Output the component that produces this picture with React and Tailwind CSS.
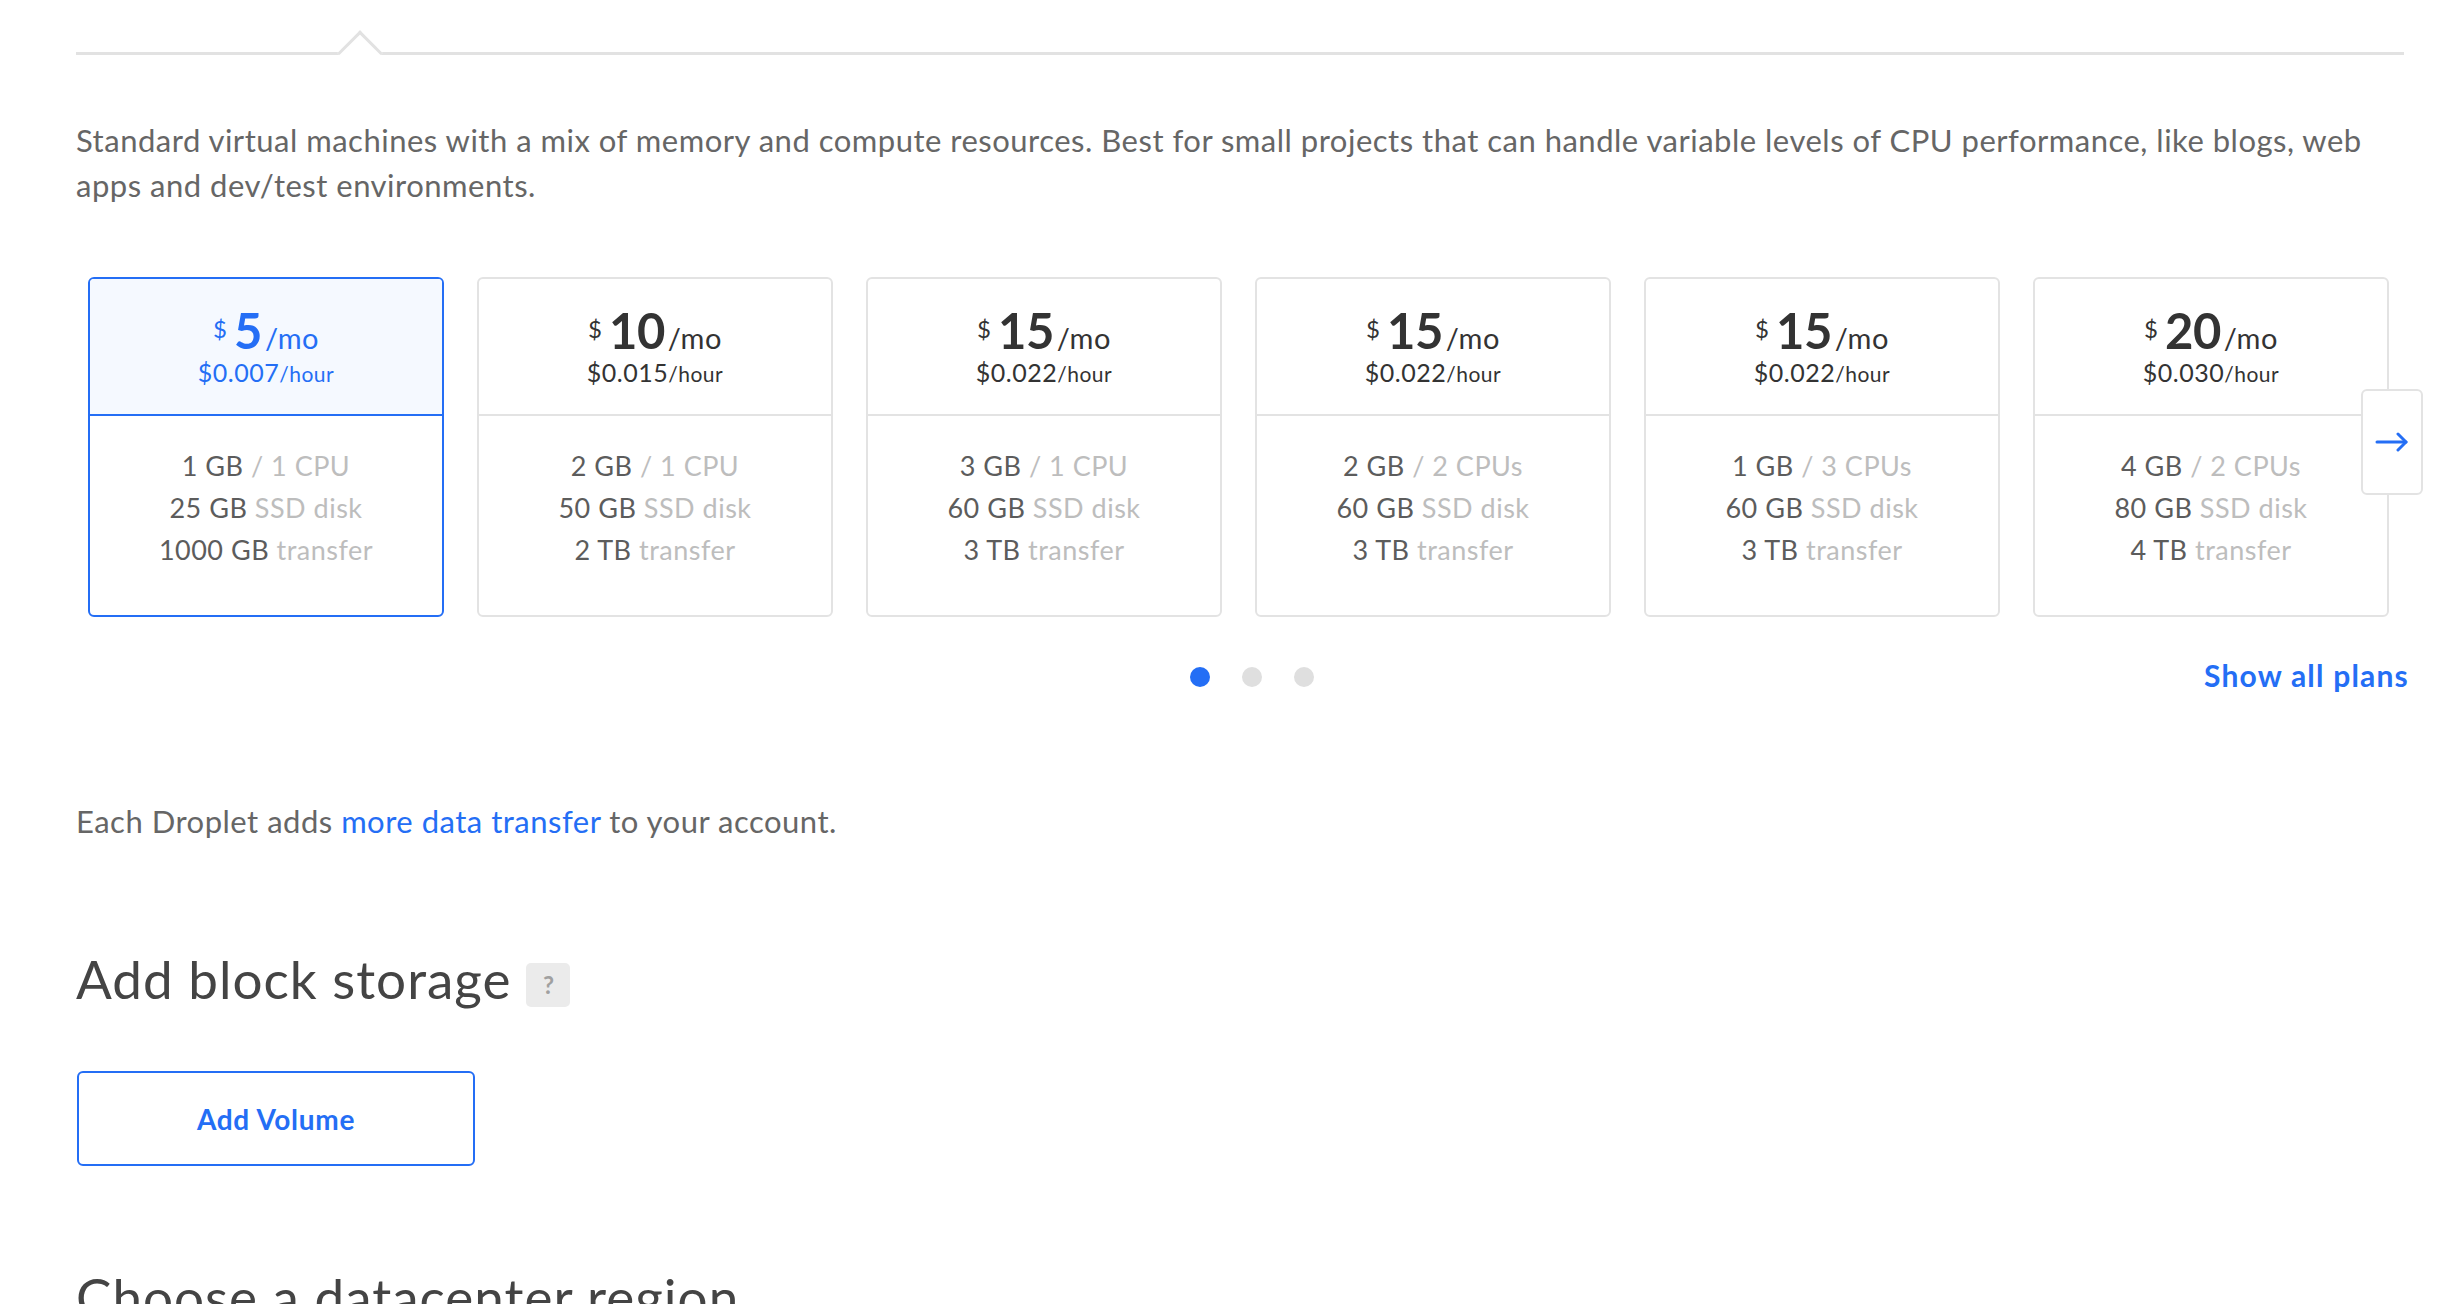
import React from "react";

const plans = [
  { price: "5", hour: "0.007", mem: "1 GB", cpu: "/ 1 CPU", disk: "25 GB", transfer: "1000 GB", selected: true },
  { price: "10", hour: "0.015", mem: "2 GB", cpu: "/ 1 CPU", disk: "50 GB", transfer: "2 TB" },
  { price: "15", hour: "0.022", mem: "3 GB", cpu: "/ 1 CPU", disk: "60 GB", transfer: "3 TB" },
  { price: "15", hour: "0.022", mem: "2 GB", cpu: "/ 2 CPUs", disk: "60 GB", transfer: "3 TB" },
  { price: "15", hour: "0.022", mem: "1 GB", cpu: "/ 3 CPUs", disk: "60 GB", transfer: "3 TB" },
  { price: "20", hour: "0.030", mem: "4 GB", cpu: "/ 2 CPUs", disk: "80 GB", transfer: "4 TB" },
];

function PlanCard({ p }) {
  const sel = p.selected;
  return (
    <div
      className={
        "w-[356px] h-[340px] shrink-0 rounded-[6px] border-2 flex flex-col overflow-hidden " +
        (sel ? "border-[#246ef5] bg-white" : "border-[#e3e3e3] bg-white")
      }
    >
      <div
        className={
          "h-[137px] border-b-2 flex flex-col items-center pt-[26px] " +
          (sel ? "bg-[#f5f9ff] border-[#246ef5] text-[#246ef5]" : "border-[#e3e3e3] text-[#333]")
        }
      >
        <div className="h-[48px] leading-[48px] whitespace-nowrap">
          <span className="text-[24px] align-[11px] mr-[7px]">$</span>
          <span className="text-[49px] font-bold tracking-[-0.5px]">{p.price}</span>
          <span className="text-[29px] ml-[3px] tracking-[0.5px]">/mo</span>
        </div>
        <div className="mt-[4px] h-[30px] leading-[30px] whitespace-nowrap tracking-[0.5px]">
          <span className="text-[25px]">${p.hour}</span>
          <span className="text-[21px]">/hour</span>
        </div>
      </div>
      <div className="pt-[29px] flex flex-col items-center text-[27px] leading-[42px] tracking-[0.5px] whitespace-nowrap">
        <div>
          <span className="text-[#5c5c5c]">{p.mem}</span> <span className="text-[#bdbdbd]">{p.cpu}</span>
        </div>
        <div>
          <span className="text-[#5c5c5c]">{p.disk}</span> <span className="text-[#bdbdbd]">SSD disk</span>
        </div>
        <div>
          <span className="text-[#5c5c5c]">{p.transfer}</span> <span className="text-[#bdbdbd]">transfer</span>
        </div>
      </div>
    </div>
  );
}

export default function App() {
  return (
    <div className="w-[2456px] h-[1304px] overflow-hidden bg-white font-['Lato',sans-serif]">
      <div className="ml-[76px] w-[2328px]">
        {/* top rule with caret */}
        <div className="pt-[52px]">
          <div className="relative h-[3px] bg-[#e2e2e2]">
            <div className="absolute left-[268px] top-[-15px] w-[32px] h-[32px] rotate-45 bg-white border-t-[3px] border-l-[3px] border-[#e2e2e2]" />
          </div>
        </div>

        <p className="mt-[63px] text-[31px] leading-[45px] tracking-[0.5px] text-[#666]">
          <span className="block whitespace-nowrap">
            Standard virtual machines with a mix of memory and compute resources. Best for small projects that can handle variable levels of CPU performance, like blogs, web
          </span>
          <span className="block whitespace-nowrap">apps and dev/test environments.</span>
        </p>

        {/* cards */}
        <div className="relative mt-[69px] px-[12px]">
          <div className="flex gap-[33px]">
            {plans.map((p, i) => (
              <PlanCard key={i} p={p} />
            ))}
          </div>
          <div className="absolute left-[2285px] top-[112px] w-[62px] h-[106px] rounded-[6px] border-2 border-[#e3e3e3] bg-white flex items-center justify-center">
            <svg width="34" height="20" viewBox="0 0 34 20" fill="none" stroke="#246ef5" strokeWidth="3" strokeLinecap="round" strokeLinejoin="round">
              <path d="M2 10 H31" />
              <path d="M23 2 L31 10 L23 18" />
            </svg>
          </div>
        </div>

        {/* dots + show all */}
        <div className="mt-[38px] h-[44px] flex items-center">
          <div className="ml-[1114px] flex gap-[32px]">
            <span className="w-[20px] h-[20px] rounded-full bg-[#246ef5]" />
            <span className="w-[20px] h-[20px] rounded-full bg-[#dfdfdf]" />
            <span className="w-[20px] h-[20px] rounded-full bg-[#dfdfdf]" />
          </div>
          <a className="ml-auto mr-[-5px] mt-[-3px] text-[30px] font-bold tracking-[1.2px] text-[#246ef5] whitespace-nowrap">Show all plans</a>
        </div>

        <p className="mt-[100px] text-[31px] leading-[45px] tracking-[0.5px] text-[#666]">
          Each Droplet adds <a className="text-[#246ef5]">more data transfer</a> to your account.
        </p>

        <div className="mt-[105px] flex items-start">
          <h2 className="text-[53px] leading-[60px] tracking-[1px] text-[#444]">Add block storage</h2>
          <span className="ml-[15px] mt-[14px] w-[44px] h-[44px] rounded-[5px] bg-[#ebebeb] text-[#a0a0a0] font-bold text-[24px] flex items-center justify-center">
            ?
          </span>
        </div>

        <div className="mt-[62px] ml-[1px]">
          <button className="w-[398px] h-[95px] border-2 border-[#246ef5] rounded-[6px] text-[#246ef5] font-bold text-[28px] tracking-[0.7px] bg-white">
            Add Volume
          </button>
        </div>

        <h2 className="mt-[101px] text-[53px] leading-[60px] tracking-[1px] text-[#444] whitespace-nowrap">Choose a datacenter region</h2>
      </div>
    </div>
  );
}
